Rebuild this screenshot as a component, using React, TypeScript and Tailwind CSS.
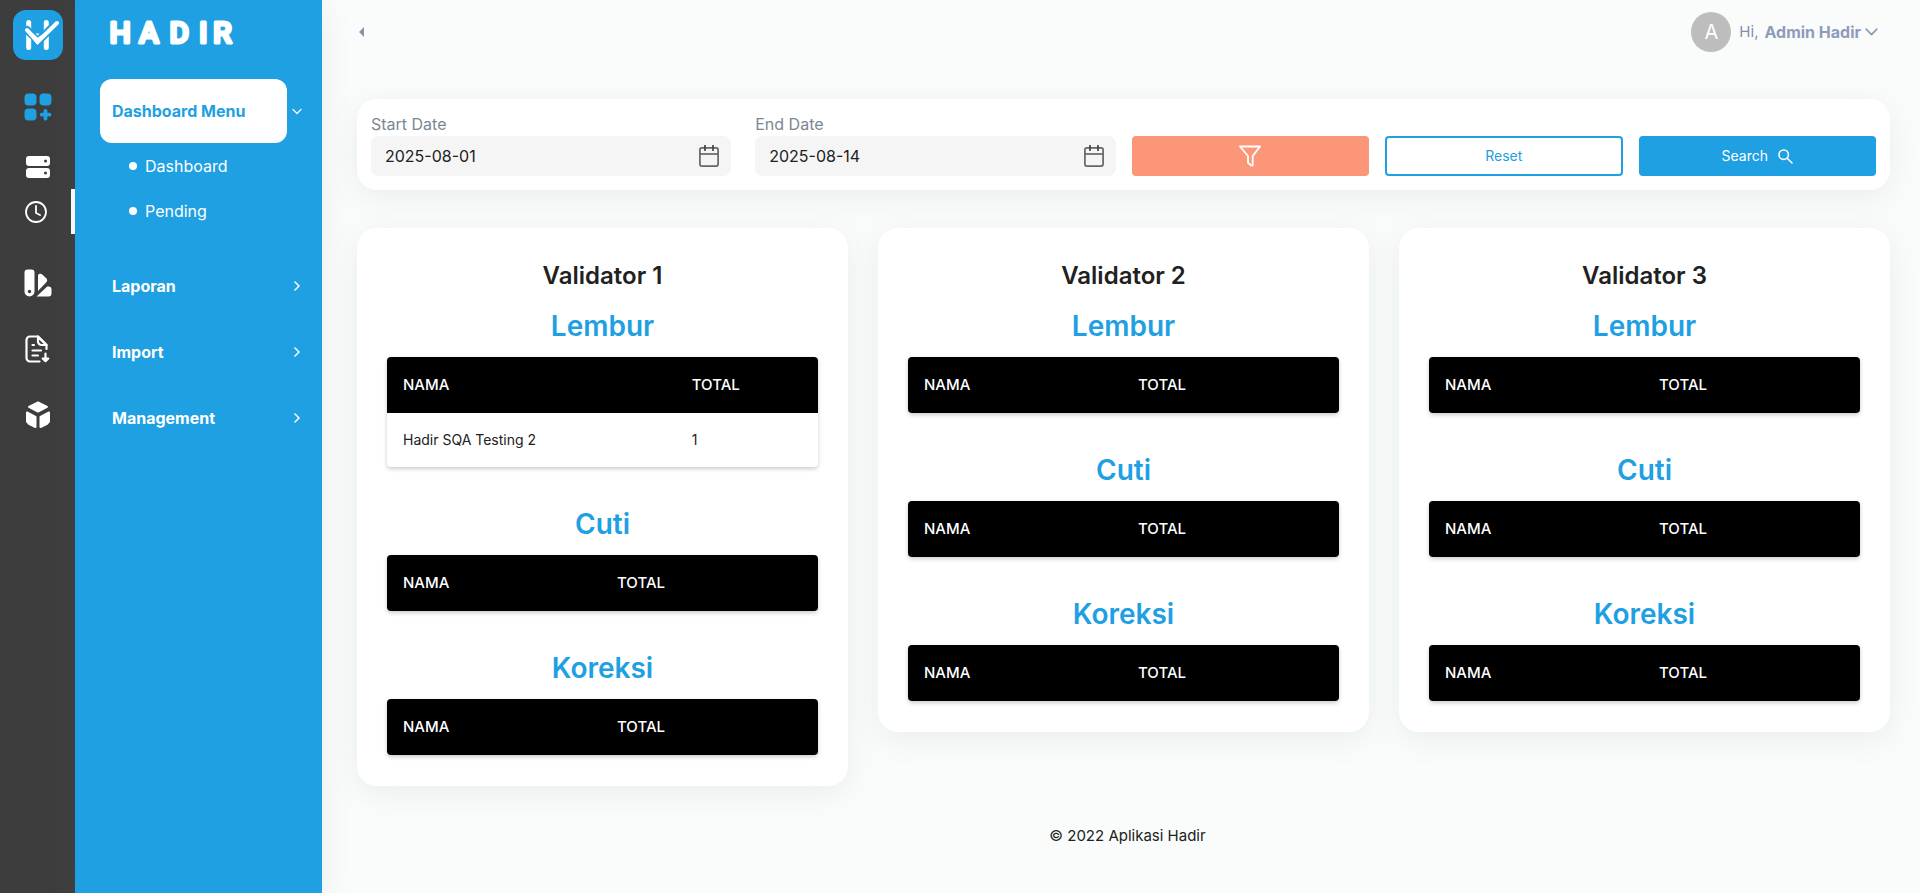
import type { ReactNode } from 'react';
import { useState } from 'react';

type Row = { name: string; total: number };
type Section = { title: string; rows: Row[] };
type Validator = { title: string; sections: Section[] };

const validators: Validator[] = [
  {
    title: 'Validator 1',
    sections: [
      { title: 'Lembur', rows: [{ name: 'Hadir SQA Testing 2', total: 1 }] },
      { title: 'Cuti', rows: [] },
      { title: 'Koreksi', rows: [] },
    ],
  },
  {
    title: 'Validator 2',
    sections: [
      { title: 'Lembur', rows: [] },
      { title: 'Cuti', rows: [] },
      { title: 'Koreksi', rows: [] },
    ],
  },
  {
    title: 'Validator 3',
    sections: [
      { title: 'Lembur', rows: [] },
      { title: 'Cuti', rows: [] },
      { title: 'Koreksi', rows: [] },
    ],
  },
];

function LogoIcon() {
  return (
    <svg width="50" height="50" viewBox="0 0 50 50" aria-hidden="true">
      <rect width="50" height="50" rx="13" fill="#1ea0e2" />
      <g stroke="#fff" strokeWidth="5" strokeLinecap="round" fill="none">
        <path d="M15.7 12.5v25M33.3 12.5v25" />
        <path d="M16 27h17" strokeWidth="4" />
      </g>
      <path d="M14 20l11.5 11L43.5 13" stroke="#1ea0e2" strokeWidth="8" fill="none" strokeLinecap="round" />
      <path d="M14 20l10.5 12L44 13" stroke="#fff" strokeWidth="4" fill="none" strokeLinecap="round" strokeLinejoin="round" />
      <path d="M15 19.5l9.5 9 4.5-3-4.5 8.5z" fill="#fff" stroke="#fff" strokeWidth="1.5" strokeLinejoin="round" />
      <path d="M22.5 23.5h4l-2 2z" fill="#fff" />
    </svg>
  );
}

function WordMark() {
  return (
    <svg width="140" height="40" viewBox="0 0 140 40" className="overflow-visible" aria-hidden="true">
      <text
        x="1.5 31 61.5 91 105"
        y="30"
        fill="#fff"
        stroke="#fff"
        strokeWidth="3"
        strokeLinejoin="round"
        className="font-['Roboto',sans-serif] text-[30px] font-medium"
      >
        HADIR
      </text>
    </svg>
  );
}

function GridIcon() {
  return (
    <svg width="28" height="28" viewBox="0 0 28 28" fill="#1ea0e2" aria-hidden="true">
      <rect x="0.5" y="0.5" width="12" height="12" rx="4" />
      <rect x="15.5" y="0.5" width="12" height="12" rx="4" />
      <rect x="0.5" y="15.5" width="12" height="12" rx="4" />
      <path d="M21.5 17.8v7.9M17.6 21.7h7.9" stroke="#1ea0e2" strokeWidth="3.8" strokeLinecap="round" />
    </svg>
  );
}

function ServerIcon() {
  return (
    <svg width="24" height="22" viewBox="0 0 24 22" aria-hidden="true">
      <rect width="24" height="10" rx="3" fill="#fff" />
      <rect y="12" width="24" height="10" rx="3" fill="#fff" />
      <circle cx="19.5" cy="5" r="1.5" fill="#3d3d3d" />
      <circle cx="19.5" cy="17" r="1.5" fill="#3d3d3d" />
    </svg>
  );
}

function ClockIcon() {
  return (
    <svg width="22" height="22" viewBox="0 0 22 22" fill="none" stroke="#fff" strokeWidth="1.8" strokeLinecap="round" strokeLinejoin="round" aria-hidden="true">
      <circle cx="11" cy="11" r="10" />
      <path d="M11 5v7l4 2" />
    </svg>
  );
}

function SwatchIcon() {
  return (
    <svg width="28" height="28" viewBox="0 0 28 28" aria-hidden="true">
      <path d="M3.5.5h4a3 3 0 0 1 3 3v19a5 5 0 0 1-10 0v-19a3 3 0 0 1 3-3z" fill="#fff" />
      <circle cx="5.5" cy="22.5" r="1.7" fill="#3d3d3d" />
      <path d="M14 6.5c0-1.7 2.6-2.3 4-1.2l4 3.6c1.5 1.3 1.600 3 .3 4.3L14 22z" fill="#fff" />
      <path d="M12.6 27.5L23.2 17.6h1.5a3 3 0 0 1 2.8 3v3.9a3 3 0 0 1-3 3z" fill="#fff" />
    </svg>
  );
}

function FileIcon() {
  return (
    <svg width="26" height="28" viewBox="0 0 26 28" fill="none" stroke="#fff" strokeWidth="2.2" strokeLinecap="round" strokeLinejoin="round" aria-hidden="true">
      <path d="M14.5 26.5H5A3.5 3.5 0 0 1 1.5 23V5A3.5 3.5 0 0 1 5 1.5h8l8.5 8.5v4" />
      <path d="M13 1.5v5a3.5 3.5 0 0 0 3.5 3.5h5z" />
      <path d="M7.5 10H9M7.5 15.5H16M7.5 20.5H13" />
      <path d="M20.5 18.5v7M17.7 23.5l2.8 2.7 2.8-2.7z" fill="#fff" />
    </svg>
  );
}

function CubeIcon() {
  return (
    <svg width="24" height="28" viewBox="0 0 24 28" fill="#fff" stroke="#fff" strokeWidth="2" strokeLinejoin="round" aria-hidden="true">
      <path d="M12 1.500l9 4.300-9 4.700-9-4.700z" />
      <path d="M1 11.500l8.500 4.300v10.200L3 22.800l-2-2.300z" />
      <path d="M23 11.500l-8.500 4.300v10.200l6.500-3.200 2-2.300z" />
    </svg>
  );
}

function ChevronDown({ className }: { className: string }) {
  return (
    <svg viewBox="0 0 13 8" className={className} fill="none" stroke="currentColor" strokeWidth="1.7" strokeLinecap="round" strokeLinejoin="round" aria-hidden="true">
      <path d="M1.2 1.2l5.3 5.5 5.3-5.5" />
    </svg>
  );
}

function ChevronRight() {
  return (
    <svg width="6" height="10" viewBox="0 0 6 10" fill="none" stroke="currentColor" strokeWidth="1.5" strokeLinecap="round" strokeLinejoin="round" aria-hidden="true">
      <path d="M1 1l4 4-4 4" />
    </svg>
  );
}

function CalendarIcon() {
  return (
    <svg width="20" height="22" viewBox="0 0 20 22" fill="none" stroke="#666" strokeWidth="1.7" aria-hidden="true">
      <rect x="0.9" y="2.9" width="18.2" height="18.2" rx="2" />
      <path d="M1 9h18" />
      <path d="M6 0v6M14 0v6" stroke="#444" />
    </svg>
  );
}

function FilterIcon() {
  return (
    <svg width="22" height="22" viewBox="0 0 22 22" fill="none" stroke="currentColor" strokeWidth="1.8" strokeLinejoin="round" aria-hidden="true">
      <path d="M1 1.500h20l-7.300 9.500v9.500l-1.700-.2-3-2.500V11z" />
    </svg>
  );
}

function SearchIcon() {
  return (
    <svg width="15" height="15" viewBox="0 0 15 15" fill="none" stroke="currentColor" strokeWidth="1.6" strokeLinecap="round" aria-hidden="true">
      <circle cx="5.7" cy="5.7" r="4.7" />
      <path d="M9.2 9.2L14 14" />
    </svg>
  );
}

function RailLink({ label, className, children }: { label: string; className: string; children: ReactNode }) {
  return (
    <a href="#" aria-label={label} className={`flex w-full items-center justify-center ${className}`}>
      {children}
    </a>
  );
}

function Rail() {
  return (
    <nav aria-label="Shortcuts" className="flex w-[75px] shrink-0 flex-col items-center bg-[#3d3d3d]">
      <RailLink label="Home" className="h-[70px]">
        <LogoIcon />
      </RailLink>
      <RailLink label="Dashboard menu" className="h-[74px]">
        <GridIcon />
      </RailLink>
      <RailLink label="Dashboard" className="h-[45px]">
        <ServerIcon />
      </RailLink>
      <RailLink label="Pending" className="h-[45px] border-r-4 border-white">
        <ClockIcon />
      </RailLink>
      <RailLink label="Laporan" className="mt-4 h-[66px]">
        <SwatchIcon />
      </RailLink>
      <RailLink label="Import" className="h-[66px]">
        <FileIcon />
      </RailLink>
      <RailLink label="Management" className="h-[66px]">
        <CubeIcon />
      </RailLink>
    </nav>
  );
}

function SubItem({ children }: { children: ReactNode }) {
  return (
    <li>
      <a href="#" className="flex h-[45px] items-center gap-2 pl-[54px]">
        <span className="size-2 rounded-full bg-white" />
        {children}
      </a>
    </li>
  );
}

function Menu() {
  return (
    <nav aria-label="Menu" className="w-[247px] shrink-0 bg-[#1ea0e2] text-white shadow-[0_7px_30px_0_rgba(90,114,123,0.11)]">
      <a href="#" className="flex h-[79px] items-start pt-[13px] pl-[33px]">
        <WordMark />
      </a>
      <button type="button" aria-expanded="true" className="flex w-full items-center gap-[5px] pl-[25px] font-bold">
        <span className="flex h-16 w-[187px] items-center rounded-xl bg-white pl-3 text-[#1ea0e2]">Dashboard Menu</span>
        <ChevronDown className="h-[7px] w-2.5" />
      </button>
      <ul className="pb-5">
        <SubItem>Dashboard</SubItem>
        <SubItem>Pending</SubItem>
      </ul>
      {['Laporan', 'Import', 'Management'].map((label) => (
        <button key={label} type="button" className="flex h-[66px] w-full items-center justify-between pr-[22px] pl-[37px] font-bold">
          {label}
          <ChevronRight />
        </button>
      ))}
    </nav>
  );
}

function Header() {
  return (
    <header className="flex h-16 items-center justify-between pr-3">
      <button type="button" aria-label="Collapse menu" className="flex h-8 w-8 items-center text-[#8a93ad]">
        <svg width="8" height="10" viewBox="0 0 8 10" fill="currentColor" aria-hidden="true">
          <path d="M7 0v10L2 5z" />
        </svg>
      </button>
      <button type="button" className="flex items-center gap-1 text-[#8f9bba]">
        <span className="mr-1 flex size-10 items-center justify-center rounded-full bg-[#bdbdbd] text-xl text-white">A</span>
        <span className="mr-0.5 text-[15px] text-[#7c8fac]">Hi,</span>
        <span className="font-bold">Admin Hadir</span>
        <ChevronDown className="h-2 w-[13px]" />
      </button>
    </header>
  );
}

function DateField({ id, label, value, onChange }: { id: string; label: string; value: string; onChange: (v: string) => void }) {
  return (
    <div>
      <label htmlFor={id} className="block leading-6 text-[#7b8794]">
        {label}
      </label>
      <div className="flex h-10 items-center rounded-lg bg-[#f5f5f5] pr-3 pl-3.5">
        <input
          id={id}
          type="text"
          value={value}
          onChange={(e) => onChange(e.target.value)}
          className="min-w-0 flex-1 bg-transparent text-[#212121] outline-none"
        />
        <button type="button" aria-label={`Choose ${label}`}>
          <CalendarIcon />
        </button>
      </div>
    </div>
  );
}

function FilterBar() {
  const [start, setStart] = useState('2025-08-01');
  const [end, setEnd] = useState('2025-08-14');
  return (
    <form
      onSubmit={(e) => e.preventDefault()}
      className="grid grid-cols-2 items-end gap-4 rounded-[20px] bg-white px-3.5 pt-[13px] pb-3.5 shadow-[0_7px_30px_0_rgba(90,114,123,0.11)]"
    >
      <div className="grid grid-cols-2 gap-6">
        <DateField id="start-date" label="Start Date" value={start} onChange={setStart} />
        <DateField id="end-date" label="End Date" value={end} onChange={setEnd} />
      </div>
      <div className="grid grid-cols-3 gap-4 text-sm">
        <button type="button" aria-label="Filter" className="flex h-10 items-center justify-center rounded bg-[#fc9679] text-white">
          <FilterIcon />
        </button>
        <button
          type="button"
          onClick={() => {
            setStart('2025-08-01');
            setEnd('2025-08-14');
          }}
          className="h-10 rounded border-2 border-[#1ea0e2] text-[#1ea0e2]"
        >
          Reset
        </button>
        <button type="submit" className="flex h-10 items-center justify-center gap-2.5 rounded bg-[#1ea0e2] text-white">
          Search
          <SearchIcon />
        </button>
      </div>
    </form>
  );
}

function SummaryTable({ label, rows }: { label: string; rows: Row[] }) {
  return (
    <div className="overflow-hidden rounded shadow-[0_2px_4px_rgba(0,0,0,0.2)]">
      <table aria-label={label} className="w-full table-fixed text-left">
        <thead className="bg-black text-white">
          <tr className="h-14">
            <th className={`px-4 text-[15px] font-medium ${rows.length > 0 ? 'w-[67%]' : 'w-[214px]'}`}>NAMA</th>
            <th className="px-4 text-[15px] font-medium">TOTAL</th>
          </tr>
        </thead>
        <tbody className="text-sm">
          {rows.map((row) => (
            <tr key={row.name} className="h-[54px]">
              <td className="px-4">{row.name}</td>
              <td className="px-4">{row.total}</td>
            </tr>
          ))}
        </tbody>
      </table>
    </div>
  );
}

function ValidatorCard({ validator }: { validator: Validator }) {
  return (
    <section className="rounded-[20px] bg-white px-[30px] pt-[30px] pb-[31px] shadow-[0_7px_30px_0_rgba(90,114,123,0.11)]">
      <h2 className="mb-[11px] text-center text-2xl leading-9 font-semibold">{validator.title}</h2>
      <div className="flex flex-col gap-9">
        {validator.sections.map((section) => (
          <div key={section.title}>
            <h3 className="mb-2.5 text-center text-[28px] leading-[42px] font-semibold text-[#1ea0e2]">{section.title}</h3>
            <SummaryTable label={`${validator.title} ${section.title}`} rows={section.rows} />
          </div>
        ))}
      </div>
    </section>
  );
}

export default function App() {
  return (
    <div className="flex min-h-screen bg-[#fafcfb] font-['Inter',sans-serif] text-base text-[#212121]">
      <Rail />
      <Menu />
      <main className="min-w-0 flex-1 pr-[30px] pl-[35px]">
        <Header />
        <div className="pt-[35px]">
          <FilterBar />
        </div>
        <div className="mt-[38px] grid grid-cols-3 items-start gap-[30px]">
          {validators.map((validator) => (
            <ValidatorCard key={validator.title} validator={validator} />
          ))}
        </div>
        <footer className="py-[38px] pl-2 text-center text-[15px] leading-6">© 2022 Aplikasi Hadir</footer>
      </main>
    </div>
  );
}
